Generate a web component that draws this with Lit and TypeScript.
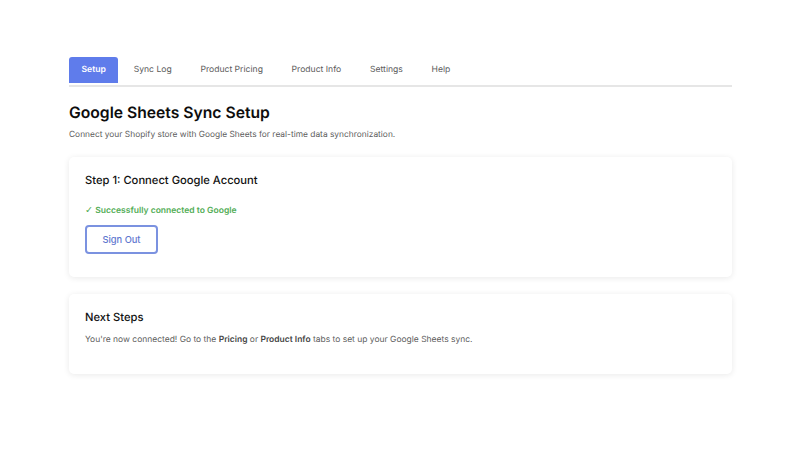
import { LitElement, css, html } from "lit";
import { customElement } from "lit/decorators.js";

const TABS = ["Setup", "Sync Log", "Product Pricing", "Product Info", "Settings", "Help"];

@customElement("app-root")
export class AppRoot extends LitElement {
  static styles = css`
    :host {
      display: block;
      height: 450px;
      overflow: hidden;
      background: #fff;
      font-family: Inter, "Liberation Sans", sans-serif;
      color: #111;
      text-rendering: geometricPrecision;
    }

    .page {
      width: 663px;
      padding: 57px 0 0 69px;
    }

    .tabs {
      display: flex;
      height: 26px;
      padding-bottom: 2px;
      border-bottom: 2px solid #e6e6e6;
      margin-bottom: 15px;
    }

    .tab {
      padding: 0 14.35px 1px;
      display: flex;
      align-items: center;
      font-size: 8.6px;
      font-weight: 400;
      color: #5c5c5c;
      white-space: nowrap;
    }

    .tab.active {
      background: #5f7ceb;
      color: #fff;
      font-weight: 600;
      border-radius: 3px 3px 0 0;
      padding: 0 12.5px 1px;
      margin-right: 1px;
    }

    h1 {
      margin: 0 0 4px;
      font-size: 15.7px;
      line-height: 22px;
      font-weight: 600;
      color: #0d0d0d;
    }

    .lead {
      margin: 0 0 15px;
      font-size: 8.4px;
      line-height: 14px;
      color: #5c5c5c;
    }

    .card {
      box-sizing: border-box;
      padding: 15px 16px;
      border-radius: 5px;
      background: #fff;
      box-shadow: 0 1px 6px rgba(0, 0, 0, 0.09);
      margin-bottom: 17px;
    }

    .card.first {
      height: 120px;
    }

    .card.second {
      height: 80px;
    }

    h2 {
      margin: 0 0 16px;
      font-size: 11.2px;
      line-height: 16px;
      font-weight: 500;
      color: #111;
    }

    .ok {
      margin: 0 0 7px;
      font-size: 8.55px;
      line-height: 14px;
      font-weight: 600;
      color: #52ad56;
    }

    .check {
      font-family: "DejaVu Sans", sans-serif;
      font-size: 9.6px;
      font-weight: 400;
    }

    .btn {
      display: block;
      box-sizing: border-box;
      width: 73px;
      height: 29px;
      padding: 0;
      background: #fff;
      border: 2px solid #7b92e0;
      border-radius: 4px;
      font: 500 9.3px Inter, "Liberation Sans", sans-serif;
      color: #5f77cf;
    }

    .card.second h2 {
      margin-bottom: 8px;
    }

    .body {
      margin: 0;
      font-size: 8.47px;
      line-height: 14px;
      color: #5c5c5c;
    }

    .body b {
      font-weight: 600;
      color: #444;
    }
  `;

  render() {
    return html`
      <div class="page">
        <nav class="tabs">
          ${TABS.map((t, i) => html`<div class="tab ${i === 0 ? "active" : ""}">${t}</div>`)}
        </nav>
        <h1>Google Sheets Sync Setup</h1>
        <p class="lead">Connect your Shopify store with Google Sheets for real-time data synchronization.</p>
        <section class="card first">
          <h2>Step 1: Connect Google Account</h2>
          <p class="ok"><span class="check">✓</span> Successfully connected to Google</p>
          <button class="btn">Sign Out</button>
        </section>
        <section class="card second">
          <h2>Next Steps</h2>
          <p class="body">You're now connected! Go to the <b>Pricing</b> or <b>Product Info</b> tabs to set up your Google Sheets sync.</p>
        </section>
      </div>
    `;
  }
}
